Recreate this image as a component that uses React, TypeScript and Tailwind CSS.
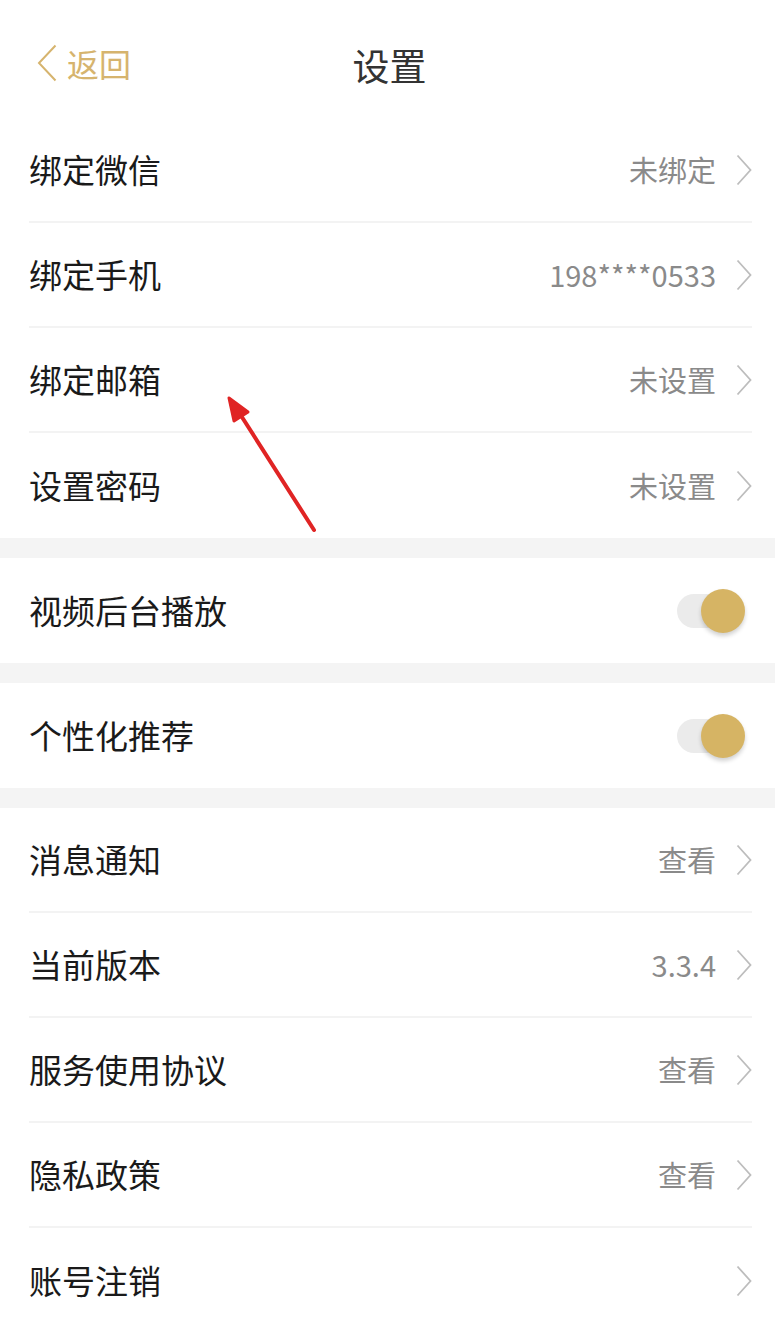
import React from 'react';

type Row = { label: string; value?: string; toggle?: boolean };

const groups: Row[][] = [
  [
    { label: '绑定微信', value: '未绑定' },
    { label: '绑定手机', value: '198****0533' },
    { label: '绑定邮箱', value: '未设置' },
    { label: '设置密码', value: '未设置' },
  ],
  [{ label: '视频后台播放', toggle: true }],
  [{ label: '个性化推荐', toggle: true }],
  [
    { label: '消息通知', value: '查看' },
    { label: '当前版本', value: '3.3.4' },
    { label: '服务使用协议', value: '查看' },
    { label: '隐私政策', value: '查看' },
    { label: '账号注销', value: '' },
  ],
];

const Chevron = () => (
  <svg width="16" height="32" viewBox="0 0 16 32" fill="none">
    <path d="M1.5 1.5 L14.5 16 L1.5 30.5" stroke="#bdbdbd" strokeWidth="1.8" />
  </svg>
);

const Toggle = () => (
  <div className="relative w-[68px] h-[44px] flex items-center">
    <div className="w-[58px] h-[34px] rounded-full bg-[#ebebeb]" />
    <div className="absolute right-0 top-0 w-[44px] h-[44px] rounded-full bg-[#d6b464] shadow-[0_3px_4px_rgba(0,0,0,0.18)]" />
  </div>
);

export default function App() {
  return (
    <div
      className="relative w-[775px] h-[1330px] overflow-hidden bg-white"
      style={{ fontFamily: '"Noto Sans CJK SC", "Noto Sans", sans-serif' }}
    >
      <header className="relative h-[118px] flex items-center justify-center">
        <div className="absolute left-[37px] top-[44px] flex items-center gap-[10px]">
          <svg width="20" height="38" viewBox="0 0 20 38" fill="none">
            <path d="M18.5 1.5 L2 19 L18.5 36.5" stroke="#d6b46e" strokeWidth="2" />
          </svg>
          <span className="text-[32px] leading-[38px] text-[#d6b46e]">返回</span>
        </div>
        <h1 className="text-[37px] leading-none text-[#333] mt-[12px] ml-[4px]">设置</h1>
      </header>

      {groups.map((g, gi) => (
        <div key={gi}>
          {gi > 0 && <div className="h-[20px] bg-[#f4f4f4]" />}
          <div className="pl-[29px] pr-[23px]">
            {g.map((r, ri) => (
              <div
                key={r.label}
                className={`h-[105px] flex items-center justify-between ${
                  ri < g.length - 1 ? 'border-b-2 border-[#f3f3f3]' : ''
                }`}
              >
                <span className="text-[33px] text-[#1a1a1a]">{r.label}</span>
                {r.toggle ? (
                  <div className="mr-[7px]">
                    <Toggle />
                  </div>
                ) : (
                  <div className="flex items-center gap-[20px]">
                    {r.value ? (
                      <span className="text-[29px] text-[#8a8a8a]">{r.value}</span>
                    ) : null}
                    <Chevron />
                  </div>
                )}
              </div>
            ))}
          </div>
        </div>
      ))}

      <svg
        className="absolute left-0 top-0 pointer-events-none"
        width="775"
        height="1330"
        viewBox="0 0 775 1330"
      >
        <line x1="314" y1="530" x2="240" y2="414" stroke="#e02424" strokeWidth="4" strokeLinecap="round" />
        <polygon points="229,398 248,412 234,421" fill="#e02424" stroke="#e02424" strokeWidth="3" strokeLinejoin="round" />
      </svg>
    </div>
  );
}
